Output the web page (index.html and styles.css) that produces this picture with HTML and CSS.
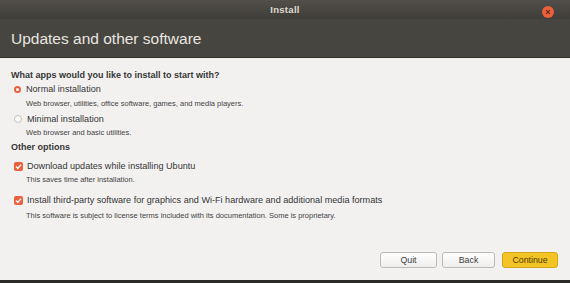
FILE: index.html
```html
<!DOCTYPE html>
<html>
<head>
<meta charset="utf-8">
<link rel="stylesheet" href="styles.css">
</head>
<body>
<div class="window">
  <div class="titlebar">
    <span class="wtitle">Install</span>
    <span class="close"><svg width="12" height="12" viewBox="0 0 12 12"><circle cx="6" cy="6" r="6" fill="#e9603b"/><path d="M4.2 4.2 L7.8 7.8 M7.8 4.2 L4.2 7.8" stroke="#5a2a1a" stroke-width="1.1"/></svg></span>
  </div>
  <div class="header">Updates and other software</div>
  <div class="content">
    <div class="section">What apps would you like to install to start with?</div>
    <div class="option">
      <span class="radio on"></span><span class="label">Normal installation</span>
    </div>
    <div class="desc d1">Web browser, utilities, office software, games, and media players.</div>
    <div class="option">
      <span class="radio"></span><span class="label">Minimal installation</span>
    </div>
    <div class="desc">Web browser and basic utilities.</div>
    <div class="section">Other options</div>
    <div class="option c1">
      <span class="check"><svg width="9" height="9" viewBox="0 0 9 9"><path d="M2 4.6 L3.8 6.4 L7 2.6" fill="none" stroke="#fff" stroke-width="1.4"/></svg></span><span class="label">Download updates while installing Ubuntu</span>
    </div>
    <div class="desc">This saves time after installation.</div>
    <div class="option c2">
      <span class="check"><svg width="9" height="9" viewBox="0 0 9 9"><path d="M2 4.6 L3.8 6.4 L7 2.6" fill="none" stroke="#fff" stroke-width="1.4"/></svg></span><span class="label">Install third-party software for graphics and Wi-Fi hardware and additional media formats</span>
    </div>
    <div class="desc d4">This software is subject to license terms included with its documentation. Some is proprietary.</div>
    <div class="buttons">
      <button class="btn quit">Quit</button>
      <button class="btn back">Back</button>
      <button class="btn primary">Continue</button>
    </div>
  </div>
  <div class="bottom"></div>
</div>
</body>
</html>
```
FILE: styles.css
```css
html, body { margin: 0; padding: 0; }
body {
  width: 570px; height: 283px; overflow: hidden;
  font-family: "Liberation Sans", sans-serif;
  background: #f2f1f0;
}
.window { width: 570px; height: 283px; display: flex; flex-direction: column; }
.titlebar {
  height: 19px; position: relative;
  background: linear-gradient(#524f4a, #3f3d39);
  display: flex; align-items: center; justify-content: center;
}
.wtitle { color: #dfdbd2; font-size: 9.5px; font-weight: bold; letter-spacing: 0.3px; }
.close { position: absolute; right: 16px; top: 4px; width: 12px; height: 12px; }
.header {
  height: 39px; background: #474540; color: #e8e6e1;
  font-size: 15.5px; padding-left: 11px; line-height: 40px;
  border-bottom: 1px solid #2f2e2b;
  box-sizing: border-box;
}
.content { flex: 1; display: flex; flex-direction: column; padding: 10px 0 0 11px; color: #363636; }
.section { font-weight: bold; font-size: 9px; height: 14px; line-height: 14px; }
.option { display: flex; align-items: center; height: 14px; padding-left: 3px; font-size: 9.1px; }
.c1 { margin-top: 5px; }
.c2 { margin-top: 6px; }
.radio {
  width: 6px; height: 6px; border-radius: 50%; border: 1px solid #c4c2bd; background: #fbfbfa;
  margin-right: 5px; box-sizing: content-box;
}
.radio.on { border: 2.5px solid #e9603b; width: 3px; height: 3px; background: #fff; }
.check {
  width: 9px; height: 9px; border-radius: 2px; background: #e9603b; margin-right: 4px;
  display: flex; align-items: center; justify-content: center;
}
.check svg { display: block; }
.desc { font-size: 7.5px; padding-left: 15px; height: 14px; line-height: 14px; color: #444; }
.d1 { height: 16px; line-height: 16px; }
.d4 { margin-top: 2px; }
.buttons { display: flex; justify-content: flex-end; gap: 6px; margin-top: auto; padding-right: 12px; padding-bottom: 12px; }
.btn {
  height: 16px; font-family: "Liberation Sans", sans-serif; font-size: 8.8px; color: #3c3c3c;
  border: 1px solid #bdbbb6; border-radius: 3px;
  background: linear-gradient(#ffffff, #efeeec); padding: 0;
}
.quit { width: 57px; }
.back { width: 53px; margin-left: -1px; }
.primary { width: 56px; margin-left: 1px; background: #f4c426; border-color: #d4a717; color: #4a3c00; }
.bottom { height: 3px; background: #2b2a28; }
```
